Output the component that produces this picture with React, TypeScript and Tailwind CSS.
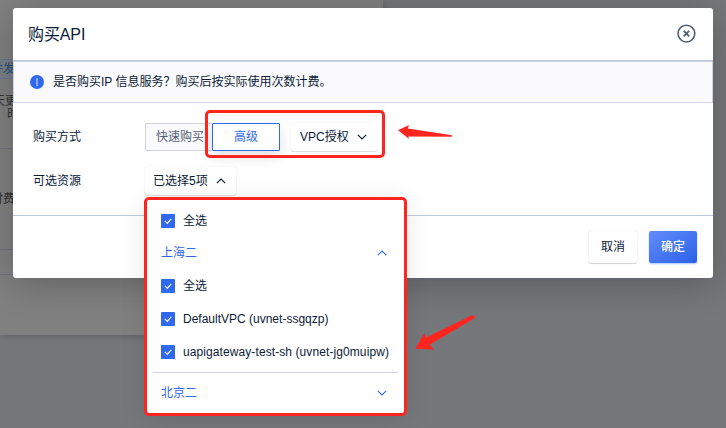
import type { ReactNode } from "react";

function Chevron({ up = false, className = "" }: { up?: boolean; className?: string }) {
  return (
    <svg width="10" height="6" viewBox="0 0 10 6" fill="none" stroke="currentColor" strokeWidth="1.1" className={className}>
      <path d={up ? "M0.8 5.2 5 1.1l4.2 4.1" : "M0.8 0.8 5 4.9 9.2 0.8"} />
    </svg>
  );
}

function CheckRow({ children }: { children: ReactNode }) {
  return (
    <label className="flex h-[33px] items-center gap-2 pl-[14px]">
      <span className="flex size-[14px] items-center justify-center rounded-[1px] bg-[#3069ee]">
        <svg width="14" height="14" viewBox="0 0 14 14" fill="none" stroke="#fff" strokeWidth="1.2">
          <path d="M3.8 6.9 6.3 9.3 10.2 4.8" />
        </svg>
      </span>
      <span className="whitespace-nowrap">{children}</span>
    </label>
  );
}

function Region({ name, open = false }: { name: string; open?: boolean }) {
  return (
    <div className="flex items-center justify-between pr-[17px] pl-[14px] text-[#3069ee]">
      <span>{name}</span>
      <Chevron up={open} />
    </div>
  );
}

function Backdrop() {
  return (
    <div className="absolute top-0 left-0 h-[335px] w-[383px] overflow-hidden bg-[#808080] shadow-[0_1px_8px_rgba(0,0,0,0.2)]">
      <div className="mt-[59px] flex h-5 w-10 items-center border-y border-[#687692] bg-[#7b8087] text-[#244a78]">
        <span className="-ml-[9px] whitespace-nowrap">并发</span>
      </div>
      <div className="mt-[16px] leading-[12px] text-[#303134]">
        <div className="-ml-[7px] whitespace-nowrap">天更</div>
        <div className="mt-px ml-[7px]">时</div>
      </div>
      <div className="mt-[28px] h-px w-10 bg-[#70727d]" />
      <div className="mt-[41px] -ml-[9px] whitespace-nowrap text-[#303134]">付费</div>
      <div className="mt-[41px] h-px w-10 bg-[#70727d]" />
      <div className="mt-[24px] h-px w-10 bg-[#70727d]" />
    </div>
  );
}

function ResourceMenu() {
  return (
    <div className="absolute top-[30px] -left-px h-[219px] w-[263px] rounded-[5px] border-[3px] border-[#fe251f] bg-white pt-1 shadow-[0_4px_26px_rgba(0,0,0,0.1)]">
      <CheckRow>全选</CheckRow>
      <div className="flex h-8 flex-col justify-center">
        <Region name="上海二" open />
      </div>
      <CheckRow>全选</CheckRow>
      <CheckRow>DefaultVPC (uvnet-ssgqzp)</CheckRow>
      <CheckRow>
        <span className="tracking-[0.09px]">uapigateway-test-sh (uvnet-jg0muipw)</span>
      </CheckRow>
      <div className="mx-[6px] mt-1 h-px bg-[#d2d3e3]" />
      <div className="flex h-[39px] flex-col justify-center">
        <Region name="北京二" />
      </div>
    </div>
  );
}

export default function App() {
  return (
    <div className="relative h-[428px] w-[726px] overflow-hidden bg-[#76777b] font-['Liberation_Sans','Noto_Sans_CJK_SC',sans-serif] text-[12px] leading-[18px] text-[#0b1a37]">
      <Backdrop />
      <section className="relative mt-2 ml-[13px] h-[270px] w-[700px] rounded-[3px] bg-white shadow-[0_6px_36px_rgba(0,0,0,0.24)]">
        <header className="flex h-[53px] items-center justify-between border-b border-[#bdc4d6] pr-[17px] pl-[15px]">
          <h1 className="pt-px text-[16px] leading-6 tracking-[-0.1px]">购买API</h1>
          <svg width="20" height="20" viewBox="0 0 20 20" fill="none" stroke="#526075">
            <circle cx="10.4" cy="9.6" r="8.4" strokeWidth="1.6" />
            <path d="m7.7 6.9 5.4 5.4m0-5.4-5.4 5.4" strokeWidth="1.8" />
          </svg>
        </header>
        <div className="flex h-[42px] items-center gap-[9px] border border-[#cdd4e9] bg-[#fafafc] pl-4">
          <svg width="14" height="14" viewBox="0 0 14 14">
            <circle cx="7" cy="7" r="7" fill="#3069ee" />
            <path d="M7 3v6.2M7 9.6v1.6" stroke="#c3d3ff" strokeWidth="1.2" />
          </svg>
          <span>是否购买IP 信息服务？购买后按实际使用次数计费。</span>
        </div>
        <div className="flex h-[112px] flex-col gap-4 pt-5 pl-5">
          <div className="flex h-7 items-center">
            <span className="w-[112px]">购买方式</span>
            <div className="relative flex">
              <button className="h-7 w-[67px] border border-r-0 border-[#d2d3e3] bg-[#fafafc] pl-[10px] text-left whitespace-nowrap text-[#526075]">快速购买</button>
              <button className="h-7 w-[68px] rounded-[1px] border border-[#3069ee] bg-white text-[#3069ee] shadow-[0_6px_14px_rgba(0,0,0,0.12)]">高级</button>
              <button className="ml-[11px] flex h-7 w-[86px] items-center justify-between rounded-[2px] bg-white pr-[10px] pl-[9px] shadow-[0_1px_1px_rgba(0,0,0,0.13),0_0_1px_rgba(0,0,0,0.16)]">
                VPC授权
                <Chevron />
              </button>
              <div className="absolute -top-[13px] left-[60px] h-[48px] w-[180px] rounded-[5px] border-[3px] border-[#fe251f]" />
            </div>
          </div>
          <div className="flex h-7 items-center">
            <span className="w-[112px]">可选资源</span>
            <div className="relative">
              <button className="flex h-7 w-[91px] items-center justify-between rounded-[2px] bg-white pr-[10px] pl-2 shadow-[0_1px_1px_rgba(0,0,0,0.13),0_0_1px_rgba(0,0,0,0.16)]">
                已选择5项
                <Chevron up />
              </button>
              <ResourceMenu />
            </div>
          </div>
        </div>
        <footer className="flex h-[63px] items-center justify-end gap-3 border-t border-[#bdc8db] pr-4">
          <button className="h-8 w-12 rounded-[2px] bg-white shadow-[0_1px_1px_rgba(0,0,0,0.16),0_0_1px_rgba(0,0,0,0.2)]">取消</button>
          <button className="h-8 w-12 rounded-[2px] bg-linear-to-br from-[#638bfa] to-[#2b61e8] font-medium text-white shadow-[0_1px_2px_rgba(48,105,238,0.4)]">确定</button>
        </footer>
      </section>
      <svg width="726" height="428" viewBox="0 0 726 428" fill="#fe251f" className="pointer-events-none absolute top-0 left-0">
        <path d="M398 130.3 409 125l-1.2 3.5 44.2 6.7-.3 1.6-43.5-.3 1 2.5z" />
        <path d="M415.3 348.8 424.8 332.5l.8 5.3 46.5-22.6q3.8.2 2.5 3L429.5 344.7l4.7 4.7z" />
      </svg>
    </div>
  );
}
